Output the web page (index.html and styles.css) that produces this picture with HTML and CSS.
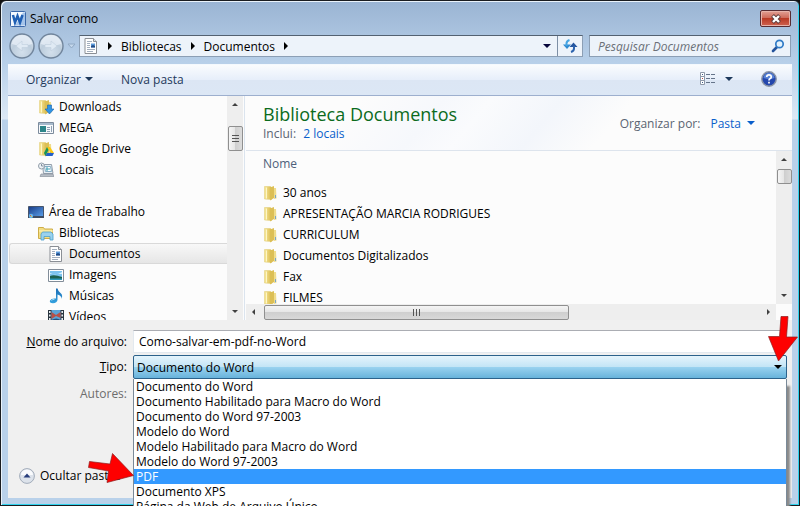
FILE: index.html
```html
<!DOCTYPE html>
<html lang="pt-BR">
<head>
<meta charset="utf-8">
<title>Salvar como</title>
<link rel="stylesheet" href="styles.css">
</head>
<body>
<svg class="defs" aria-hidden="true">
  <defs>
    <linearGradient id="gold" x1="0" x2="1" y1="0" y2="0">
      <stop offset="0" stop-color="#f8e99a"/><stop offset="1" stop-color="#d9b94c"/>
    </linearGradient>
    <linearGradient id="screen" x1="0" x2="1" y1="0" y2="1">
      <stop offset="0" stop-color="#173a86"/><stop offset="1" stop-color="#5ba0ea"/>
    </linearGradient>
    <linearGradient id="note" x1="0" x2="0" y1="0" y2="1">
      <stop offset="0" stop-color="#1c6eb5"/><stop offset="1" stop-color="#35a3e0"/>
    </linearGradient>
    <radialGradient id="orb" cx=".5" cy=".75" r=".7">
      <stop offset="0" stop-color="#d3e0ec"/><stop offset=".6" stop-color="#bdcddc"/><stop offset="1" stop-color="#dde7f0"/>
    </radialGradient>
    <symbol id="i-folder" viewBox="0 0 16 16">
      <path d="M1.500 1.500h6l1 1v12l-7-.5z" fill="url(#gold)" stroke="#e3cf7c" stroke-width=".6"/>
      <path d="M7 2.500l4-1.500v12l-4 2.500z" fill="#dcbf55"/>
      <path d="M3.500 2.500v11" stroke="#fdf6c6"/>
      <path d="M11 3h2l.5 10.500-2.500.5z" fill="#efdc8b"/>
      <path d="M12.500 10v3" stroke="#7ba6c9"/>
    </symbol>
    <symbol id="i-doc" viewBox="0 0 16 16">
      <path d="M2 .5h8.500l3 3v12H2z" fill="#fff" stroke="#8b8f95"/>
      <path d="M10.500.5v3h3" fill="#dfe3e8" stroke="#8b8f95"/>
      <path d="M4 3.500h5M4 5.500h3M4 7.500h3M4 9.500h3M4 11.500h8M4 13.500h6" stroke="#a3afbe"/>
      <path d="M8 5.500h4v4H8z" fill="#5c9bdc"/>
      <path d="M8 8l2-1 2 1v1.500H8z" fill="#224b85"/>
    </symbol>
  </defs>
</svg>

<div class="window">
  <header class="titlebar">
    <svg class="icon" viewBox="0 0 16 16" aria-hidden="true">
      <rect x=".5" y=".5" width="15" height="15" rx="1" fill="#f4f9ff" stroke="#3a67a9"/>
      <path d="M13 1.500h2v13H5z" fill="#a5c4ea"/>
      <path d="M3 4l2 7.500L7.500 5 10 11.500 12.500 4" fill="none" stroke="#1f5fb4" stroke-width="2.500"/>
    </svg>
    <h1>Salvar como</h1>
    <button class="close" aria-label="Fechar">
      <svg viewBox="0 0 12 10" aria-hidden="true"><path d="M2.500 1.500l7 7M9.500 1.500l-7 7" stroke="#5a3a3a" stroke-width="4"/><path d="M3 2l6 6M9 2L3 8" stroke="#fff" stroke-width="2.400"/></svg>
    </button>
  </header>

  <nav class="navbar">
    <div class="history">
      <button aria-label="Voltar"><svg viewBox="0 0 26 26" aria-hidden="true"><circle cx="13" cy="13" r="12" fill="url(#orb)" stroke="#71859c" stroke-width="1.400"/><path d="M3 11a10 9 0 0 1 20 0q-10 4-20 0z" fill="#e6eef6" opacity=".8"/><path d="M7 13l6-5v3.500h6v3h-6V18z" fill="#e0eaf4" stroke="#c0cfdd" stroke-width=".6"/></svg></button>
      <button aria-label="Avançar"><svg viewBox="0 0 26 26" aria-hidden="true"><circle cx="13" cy="13" r="12" fill="url(#orb)" stroke="#71859c" stroke-width="1.400"/><path d="M3 11a10 9 0 0 1 20 0q-10 4-20 0z" fill="#e6eef6" opacity=".8"/><path d="M19 13l-6-5v3.500H7v3h6V18z" fill="#e0eaf4" stroke="#c0cfdd" stroke-width=".6"/></svg></button>
      <svg class="recent" viewBox="0 0 9 6" aria-hidden="true"><path d="M1 1h7L4.500 5z" fill="#c5d8ec" stroke="#90a8c4"/></svg>
    </div>
    <div class="address">
      <svg class="icon" aria-hidden="true"><use href="#i-doc"/></svg>
      <i class="tri right"></i>
      <a href="#">Bibliotecas</a>
      <i class="tri right"></i>
      <a href="#">Documentos</a>
      <i class="tri right"></i>
      <button class="drop" aria-label="Locais anteriores"><i class="tri down"></i></button>
      <button class="refresh" aria-label="Atualizar">
        <svg viewBox="0 0 16 16" aria-hidden="true"><path d="M1 6.500h8L5 11z" fill="#2f8bd2"/><path d="M4.500 8V5.500Q4.500 3 7.500 2" fill="none" stroke="#45a4e2" stroke-width="2"/><path d="M7.500 9h8l-4-4.500z" fill="#24559f"/><path d="M12 8v2.500q0 2.500-3 3.500" fill="none" stroke="#2c62ad" stroke-width="2"/></svg>
      </button>
    </div>
    <div class="search">
      <input type="search" placeholder="Pesquisar Documentos" aria-label="Pesquisar Documentos">
      <svg viewBox="0 0 14 14" aria-hidden="true"><path d="M6.500 7.500L2 12" stroke="#24539b" stroke-width="2.600" stroke-linecap="round"/><circle cx="8.500" cy="5" r="3.700" fill="#e3f2fd" stroke="#2f7ac6" stroke-width="1.700"/></svg>
    </div>
  </nav>

  <div class="toolbar">
    <button>Organizar <i class="tri down"></i></button>
    <button>Nova pasta</button>
    <button class="view" aria-label="Modo de exibição">
      <svg viewBox="0 0 16 14" aria-hidden="true"><path d="M.5.500h4v4h-4zM.5 4.500h4v4h-4zM.5 8.500h4v4h-4z" fill="#fff" stroke="#8e99a9"/><path d="M2 2.500h1M2 10.500h1" stroke="#3d5a88"/><path d="M2 6.500h1" stroke="#b04c4c"/><path d="M6 2.500h4m1 0h4M6 6.500h4m1 0h4M6 10.500h4m1 0h4" stroke="#65748a"/></svg>
      <i class="tri down"></i>
    </button>
    <button class="help" aria-label="Ajuda">
      <svg viewBox="0 0 16 16" aria-hidden="true"><circle cx="8" cy="8" r="7.200" fill="#2447ad" stroke="#8a94a6" stroke-width="1.400"/><path d="M2.500 7a5.500 5 0 0 1 11 0q-5 2-11 0z" fill="#5a84d6"/><path d="M5.700 6Q5.800 3.800 8 3.800T10.300 6Q10.300 7.200 8.900 7.800 8 8.300 8 9.500M8 10.800v1.800" fill="none" stroke="#fff" stroke-width="1.700"/></svg>
    </button>
  </div>

  <main class="browse">
    <div class="side">
      <ul class="tree">
        <li class="l2"><svg class="icon" viewBox="0 0 16 16"><use href="#i-folder"/><path d="M9.500 6h4v4H16l-4.500 5L7 10h2.500z" fill="#2f94e4" stroke="#1863ad" stroke-width=".6"/></svg>Downloads</li>
        <li class="l2"><svg class="icon" viewBox="0 0 16 16"><path d="M.5 2.500h15v11H.5z" fill="#f7f9fb" stroke="#7c8b9c"/><path d="M1 3h14v2H1z" fill="#a5b9cc"/><path d="M2 6h6v6H2z" fill="#2c8589"/><path d="M9 7.500h3M9 9.500h3M9 11.500h3M13.500 6v6" stroke="#8fa1b5"/></svg>MEGA</li>
        <li class="l2"><svg class="icon" viewBox="0 0 16 16"><use href="#i-folder"/><path d="M9 6h3l4 6h-3z" fill="#fbc814"/><path d="M9 6l1.500 3-3 6L6 12z" fill="#169656"/><path d="M9 12h7l-1.500 3h-7z" fill="#2360c8"/></svg>Google Drive</li>
        <li class="l2"><svg class="icon" viewBox="0 0 16 16"><path d="M4.500 2.500h9l1.500 9H5.500z" fill="#e5edf3" stroke="#929eab"/><path d="M6.500 4.500h6l1 5h-6z" fill="#fff" stroke="#85adc5"/><path d="M8 7h4M9 5v4" stroke="#3ca2b5"/><path d="M3 12h12l1 2.500H2z" fill="#b7bec6" stroke="#8b939d" stroke-width=".7"/><circle cx="3.500" cy="4" r="3" fill="#eef2f5" stroke="#919da9"/><path d="M3.500 2v2h2" fill="none" stroke="#68798b" stroke-width=".8"/></svg>Locais</li>
        <li class="gap"></li>
        <li class="l1"><svg class="icon" viewBox="0 0 16 16"><path d="M.5 2.500h15v10H.5z" fill="url(#screen)" stroke="#47556b"/><path d="M0 12h16v2H0z" fill="#3e4c61"/><circle cx="3" cy="12" r="2.200" fill="#67b5e8"/><path d="M2 11h1v1H2z" fill="#e35c32"/><path d="M3 12h1v1H3z" fill="#f3cf3b"/></svg>Área de Trabalho</li>
        <li class="l2"><svg class="icon" viewBox="0 0 16 16"><path d="M.5 4V2.500h5L6.500 4h8v9.500H.5z" fill="#f3dd82" stroke="#cead48"/><path d="M1 6h14" stroke="#fff6be"/><path d="M3 15V9l1.500-2h8.500L15 9v6h-3v-3.500H6V15z" fill="#9ad2ee" stroke="#4d9fca" stroke-width=".8"/></svg>Bibliotecas</li>
        <li class="l3 current"><svg class="icon"><use href="#i-doc"/></svg>Documentos</li>
        <li class="l3"><svg class="icon" viewBox="0 0 16 16"><path d="M.5 2.500h15v12H.5z" fill="#fff" stroke="#828d99"/><path d="M2 4h12v9H2z" fill="#7cc3ef"/><path d="M2 6q6 3 12-1v2H2z" fill="#d9f1fc"/><path d="M2 9q4-2 12 1v3H2z" fill="#1d614f"/><path d="M2 11.500h12V13H2z" fill="#2f99ba"/></svg>Imagens</li>
        <li class="l3"><svg class="icon" viewBox="0 0 16 16"><path d="M8 .5h1.500q.5 3 3.500 5 2 2 .5 5.500.5-3-4-4.500V12Q9 15 5 15.300 1 15 2 12.500 3.500 10 8 10.500z" fill="url(#note)"/><path d="M3.500 12.500q1-1.300 3-1.200" stroke="#a9e0fa" fill="none"/></svg>Músicas</li>
        <li class="l3"><svg class="icon" viewBox="0 0 16 16"><path d="M0 1h16v14H0z" fill="#2b3640"/><path d="M3.500 1h9v14h-9z" fill="#5ba3d6"/><path d="M3.500 3l4.500 3 4.500-3v6L8 7 3.500 10z" fill="#b85046"/><path d="M3.500 11q5-3 9 0v4h-9z" fill="#274f7c"/><path d="M1.800 2v12M14.200 2v12" stroke="#e7edf1" stroke-width="1.600" stroke-dasharray="2 1.500"/></svg>Vídeos</li>
      </ul>
      <div class="vscroll"><i class="tri up"></i><span class="thumb grip"></span><i class="tri down"></i></div>
    </div>

    <section class="library">
      <div class="libhead">
        <div>
          <h2>Biblioteca Documentos</h2>
          <p>Inclui: <a href="#">2 locais</a></p>
        </div>
        <div class="arrange">Organizar por: <button>Pasta <i class="tri down"></i></button></div>
      </div>
      <div class="listing">
        <div class="files">
          <div class="colhead">Nome</div>
          <ul>
            <li><svg class="icon"><use href="#i-folder"/></svg>30 anos</li>
            <li><svg class="icon"><use href="#i-folder"/></svg>APRESENTAÇÃO MARCIA RODRIGUES</li>
            <li><svg class="icon"><use href="#i-folder"/></svg>CURRICULUM</li>
            <li><svg class="icon"><use href="#i-folder"/></svg>Documentos Digitalizados</li>
            <li><svg class="icon"><use href="#i-folder"/></svg>Fax</li>
            <li><svg class="icon"><use href="#i-folder"/></svg>FILMES</li>
          </ul>
        </div>
        <div class="vscroll"><i class="tri up"></i><span class="thumb"></span><i class="tri down"></i></div>
        <div class="hscroll"><i class="tri left"></i><span class="thumb"></span><i class="tri right"></i></div>
      </div>
    </section>
  </main>

  <form class="form">
    <label for="nome"><u>N</u>ome do arquivo:</label>
    <input id="nome" type="text" value="Como-salvar-em-pdf-no-Word">
    <label for="tipo"><u>T</u>ipo:</label>
    <div class="combo">
      <select id="tipo"><option>Documento do Word</option></select>
      <i class="tri down"></i>
      <svg class="pointer-down" viewBox="0 0 30 46" aria-hidden="true"><path d="M13 .500h7L18.500 21h11L10.500 45 .5 20.500h11z" fill="#fe0000" stroke="#8c2020" stroke-width=".7"/></svg>
      <ul class="menu" role="listbox" aria-label="Tipo">
        <li role="option">Documento do Word</li>
        <li role="option">Documento Habilitado para Macro do Word</li>
        <li role="option">Documento do Word 97-2003</li>
        <li role="option">Modelo do Word</li>
        <li role="option">Modelo Habilitado para Macro do Word</li>
        <li role="option">Modelo do Word 97-2003</li>
        <li role="option" class="active" aria-selected="true">PDF
          <svg class="pointer-right" viewBox="0 0 46 30" aria-hidden="true"><path d="M1.500 8.500L22 11 24.500.500 45.500 22.500 19 29.500 20.500 18 .5 14.500z" fill="#fe0000" stroke="#8c2020" stroke-width=".7"/></svg>
        </li>
        <li role="option">Documento XPS</li>
        <li role="option">Página da Web de Arquivo Único</li>
      </ul>
    </div>
    <span class="authors">Autores:</span>
    <button type="button" class="hide">
      <svg class="icon" viewBox="0 0 16 16" aria-hidden="true"><circle cx="8" cy="8" r="7.400" fill="#dde3eb" stroke="#a2acba"/><path d="M2 7a6 5.500 0 0 1 12 0z" fill="#fafbfd"/><path d="M4.500 9.500L8 5.500l3.500 4z" fill="#293e7c"/></svg>
      Ocultar pastas
    </button>
  </form>
</div>
</body>
</html>
```
FILE: styles.css
```css
* { box-sizing: border-box; }

body {
  margin: 0;
  height: 100vh;
  overflow: hidden;
  background: #111;
  font: 12px/21px "Open Sans", "Noto Sans", sans-serif;
  color: #000;
}

h1, h2, p, ul { margin: 0; padding: 0; font: inherit; }
ul { list-style: none; }
a { color: inherit; text-decoration: none; }
button { border: 0; padding: 0; background: none; font: inherit; color: inherit; }
input, select { font: inherit; color: inherit; border-radius: 0; }
.defs { position: absolute; width: 0; height: 0; }
.icon { width: 16px; height: 16px; flex: none; }

.tri { flex: none; width: 0; height: 0; border: 4px solid transparent; }
.tri.right { border-left-color: currentColor; border-right-width: 0; }
.tri.left { border-right-color: currentColor; border-left-width: 0; }
.tri.down { border-top-color: currentColor; border-bottom-width: 0; }
.tri.up { border-bottom-color: currentColor; border-top-width: 0; }

.window {
  height: 100vh;
  display: flex;
  flex-direction: column;
  padding: 0 6px 7px;
  border: 1px solid #1a1c20;
  border-radius: 6px 6px 0 0;
  background: linear-gradient(#9ab4d3, #b9d1ea 64px, #dce8f5 118px, #b9d1ea 119px);
  box-shadow: inset 1px 1px #eaf3fb, inset -1px -1px #2fd3ee;
}

.titlebar {
  display: flex;
  align-items: center;
  gap: 4px;
  height: 31px;
  padding: 4px 2px 0 3px;
}
.titlebar h1 { flex: 1; }
.close {
  width: 31px;
  height: 17px;
  border: 1px solid #582c32;
  border-radius: 2px;
  background: linear-gradient(#e2a195, #cf6b5b 45%, #b93a25 50%, #cf6350);
  box-shadow: inset 0 0 0 1px #e7b3aa;
  display: grid;
  place-items: center;
}
.close svg { width: 12px; height: 10px; }

.navbar { display: flex; align-items: center; height: 32px; padding: 0 2px 4px; }
.history { display: flex; align-items: center; width: 70px; gap: 3px; }
.history button { width: 26px; height: 26px; }
.history button svg { display: block; }
.recent { width: 9px; height: 6px; }
.address, .search {
  display: flex;
  align-items: center;
  height: 22px;
  border: 1px solid #8c9fb5;
  border-top-color: #536171;
  background: #edf3fa;
}
.address { flex: 1; gap: 9px; padding-left: 3px; }
.drop { margin-left: auto; color: #05053a; }
.drop .tri { display: block; }
.refresh { width: 25px; height: 20px; border-left: 1px solid #7d8fa5; margin-left: -3px; }
.refresh svg { width: 16px; height: 16px; display: block; margin: auto; }
.search { width: 202px; margin-left: 6px; padding: 0 5px 0 8px; }
.search input { flex: 1; min-width: 0; padding: 0; border: 0; background: none; font-style: italic; }
.search input::placeholder { color: #6b7078; opacity: 1; }
.search svg { width: 14px; height: 14px; }

.toolbar {
  display: flex;
  align-items: center;
  height: 32px;
  margin: 0 1px;
  padding: 0 15px 2px 18px;
  gap: 28px;
  border-top: 1px solid #f4f9fe;
  border-bottom: 1px solid #9dafce;
  background: linear-gradient(#fafcfe, #e6eefa 50%, #dce6f4 51%, #dce7f5);
  color: #1e395b;
}
.toolbar button { display: flex; align-items: center; gap: 4px; }
.toolbar .view { margin-left: auto; gap: 9px; }
.view svg { width: 16px; height: 14px; }
.help svg { width: 16px; height: 16px; }

.browse { flex: 1; min-height: 0; display: flex; margin: 0 1px; background: #fcfcfc; }
.side { display: flex; width: 235px; padding-left: 1px; }
.tree { flex: 1; overflow: hidden; }
.tree li { display: flex; align-items: center; gap: 5px; height: 21px; }
.tree .l1 { padding-left: 19px; }
.tree .l2 { padding-left: 29px; }
.tree .l3 { padding-left: 39px; }
.tree .current {
  border: 1px solid #d9d9d9;
  border-right: 0;
  border-radius: 3px 0 0 3px;
  padding-left: 38px;
  background: linear-gradient(#f8f8f8, #e6e6e6);
}

.vscroll, .hscroll { display: flex; align-items: center; justify-content: space-between; background: #eee; color: #404040; }
.vscroll { flex-direction: column; width: 16px; padding: 7px 0; }
.hscroll { height: 16px; padding: 0 6px; }
.vscroll .tri, .hscroll .tri { border-width: 3px; }
.vscroll .tri.up { border-top-width: 0; }
.vscroll .tri.down { border-bottom-width: 0; }
.hscroll .tri.left { border-left-width: 0; }
.hscroll .tri.right { border-right-width: 0; }
.thumb { border: 1px solid #8f8f8f; border-radius: 2px; background: linear-gradient(90deg, #f5f5f5, #e6e6e6 45%, #cfcfcf 50%, #dcdcdc); }
.vscroll .thumb { width: 15px; height: 15px; margin: 8px 0 auto; }
.side .thumb { height: 25px; margin-top: 20px; }
.grip { display: grid; place-items: center; }
.grip::before, .hscroll .thumb::before { content: ""; width: 7px; height: 7px; background: repeating-linear-gradient(#555 0 1px, transparent 1px 3px); }
.hscroll .thumb { display: grid; place-items: center; width: 305px; height: 15px; margin: 0 auto 0 9px; background: linear-gradient(#f5f5f5, #e6e6e6 45%, #cfcfcf 50%, #d8d8d8); }
.hscroll .thumb::before { background: repeating-linear-gradient(90deg, #555 0 1px, transparent 1px 3px); }

.library { flex: 1; min-width: 0; display: flex; flex-direction: column; margin-left: 1px; border-left: 1px solid #dbe4ee; padding-left: 1px; }
.libhead {
  display: flex;
  justify-content: space-between;
  align-items: center;
  height: 55px;
  padding: 0 37px 0 17px;
  border-bottom: 1px solid #dde4ed;
  background: linear-gradient(130deg, #fcfcfc 20%, #f6f8fc 34%, #fafbfd 42%, #f3f6fb 54%, #fcfcfc 66%);
  color: #5a6472;
}
.libhead h2 { font-size: 18px; line-height: 22px; color: #0b6b1c; }
.libhead p { line-height: 18px; }
.libhead a, .arrange button { color: #0a5fcb; margin-left: 4px; }
.arrange { display: flex; gap: 6px; }
.arrange button { display: flex; align-items: center; gap: 6px; }
.listing { flex: 1; min-height: 0; display: grid; grid-template: minmax(0, 1fr) 16px / minmax(0, 1fr) 16px; }
.files { overflow: hidden; padding-left: 17px; }
.colhead { height: 31px; line-height: 26px; color: #4c607a; }
.files li { display: flex; align-items: center; gap: 4px; height: 21px; }

.form {
  display: grid;
  grid-template-columns: 119px 1fr;
  grid-template-rows: 23px 24px 23px 1fr;
  gap: 2px 6px;
  height: 178px;
  margin: 0 1px;
  padding: 10px 5px 11px 0;
  background: #f0f0f0;
  line-height: 23px;
}
.form label, .authors { text-align: right; white-space: nowrap; }
.form input { min-width: 0; padding: 0 5px; border: 1px solid #e3e9ef; border-top-color: #abadb3; background: #fff; }
.combo { position: relative; display: flex; align-items: center; }
.combo select {
  appearance: none;
  width: 100%;
  height: 24px;
  padding: 0 3px;
  border: 1px solid #2c628b;
  border-radius: 2px;
  background: linear-gradient(#e5f4fc, #c4e5f6 48%, #98d1ef 52%, #68b3db);
}
.combo > .tri { position: absolute; right: 5px; }
.pointer-down { position: absolute; right: -11px; top: -39px; width: 30px; height: 46px; z-index: 3; }
.menu {
  position: absolute;
  top: 24px;
  left: 0;
  right: 0;
  z-index: 2;
  border: solid #7a8a99;
  border-width: 0 1px;
  background: #fff;
  box-shadow: 3px 7px 2px #8a8a8a;
  line-height: 15px;
}
.menu li { position: relative; height: 15px; padding-left: 2px; }
.menu .active { background: #3399ff; color: #fff; }
.pointer-right { position: absolute; right: 100%; top: -16px; width: 46px; height: 30px; }
.authors { color: #6d6d6d; line-height: 26px; }
.hide { grid-column: 1; align-self: end; display: flex; align-items: center; gap: 5px; padding-left: 11px; white-space: nowrap; }
```
